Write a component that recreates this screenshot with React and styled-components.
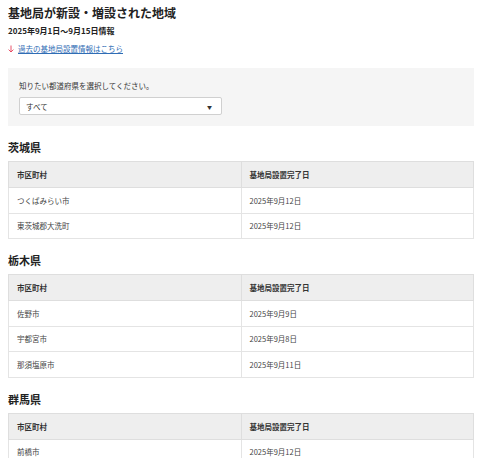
import React from 'react'
import styled, { createGlobalStyle } from 'styled-components'

const Global = createGlobalStyle`
  body {
    margin: 0;
    background: #fff;
    color: #333;
    font-family: "Noto Sans CJK JP", "Noto Sans", sans-serif;
  }
`
const Page = styled.div`
  padding: 4px 6px 0 8px;
`
const Title = styled.h1`
  margin: 0;
  font-size: 12px;
  line-height: 18px;
  font-weight: bold;
  color: #222;
`
const Period = styled.p`
  margin: 3px 0 0;
  font-size: 8px;
  line-height: 12px;
  font-weight: bold;
  color: #222;
`
const PastLink = styled.a`
  display: flex;
  align-items: center;
  gap: 4px;
  margin-top: 6px;
  font-size: 7.5px;
  line-height: 12px;
  color: #2f6db5;
  cursor: pointer;
  span { text-decoration: underline; }
`
const Arrow = styled.svg`
  width: 6px;
  height: 8px;
  flex: none;
`
const Filter = styled.div`
  margin-top: 13px;
  background: #f5f5f5;
  padding: 12px 11px 11px;
  height: 58px;
  box-sizing: border-box;
`
const Label = styled.div`
  font-size: 7.5px;
  line-height: 12px;
  color: #333;
`
const Select = styled.div`
  margin-top: 5px;
  width: 203px;
  height: 18px;
  box-sizing: border-box;
  background: #fff;
  border: 1px solid #d0d0d0;
  border-radius: 2px;
  display: flex;
  align-items: center;
  justify-content: space-between;
  padding: 0 9px 0 6px;
  font-size: 7.5px;
  color: #333;
`
const Caret = styled.span`
  font-size: 5px;
  color: #333;
`
const Section = styled.section`
  margin-top: ${p => p.$first ? '13px' : '13px'};
`
const Pref = styled.h2`
  margin: 0 0 6px;
  font-size: 11px;
  line-height: 16px;
  font-weight: bold;
  color: #222;
`
const Table = styled.table`
  width: 100%;
  border-collapse: collapse;
  table-layout: fixed;
  font-size: 7.5px;
`
const Th = styled.th`
  background: #eeeeee;
  border: 1px solid #dedede;
  height: 25px;
  padding: 0 8px;
  text-align: left;
  font-weight: bold;
  color: #333;
`
const Td = styled.td`
  border: 1px solid #e4e4e4;
  height: 24.5px;
  padding: 0 8px;
  color: #444;
`

const data = [
  { pref: '茨城県', rows: [['つくばみらい市', '2025年9月12日'], ['東茨城郡大洗町', '2025年9月12日']] },
  { pref: '栃木県', rows: [['佐野市', '2025年9月9日'], ['宇都宮市', '2025年9月8日'], ['那須塩原市', '2025年9月11日']] },
  { pref: '群馬県', rows: [['前橋市', '2025年9月12日']] },
]

export default function App() {
  return (
    <Page>
      <Global />
      <Title>基地局が新設・増設された地域</Title>
      <Period>2025年9月1日〜9月15日情報</Period>
      <PastLink>
        <Arrow viewBox="0 0 6 8">
          <path d="M3 0.5V7M0.6 4.6L3 7L5.4 4.6" fill="none" stroke="#e5405a" strokeWidth="0.9" />
        </Arrow>
        <span>過去の基地局設置情報はこちら</span>
      </PastLink>
      <Filter>
        <Label>知りたい都道府県を選択してください。</Label>
        <Select>
          <span>すべて</span>
          <Caret>▼</Caret>
        </Select>
      </Filter>
      {data.map((s, i) => (
        <Section key={s.pref} $first={i === 0}>
          <Pref>{s.pref}</Pref>
          <Table>
            <thead>
              <tr><Th>市区町村</Th><Th>基地局設置完了日</Th></tr>
            </thead>
            <tbody>
              {s.rows.map(r => (
                <tr key={r[0]}><Td>{r[0]}</Td><Td>{r[1]}</Td></tr>
              ))}
            </tbody>
          </Table>
        </Section>
      ))}
    </Page>
  )
}
